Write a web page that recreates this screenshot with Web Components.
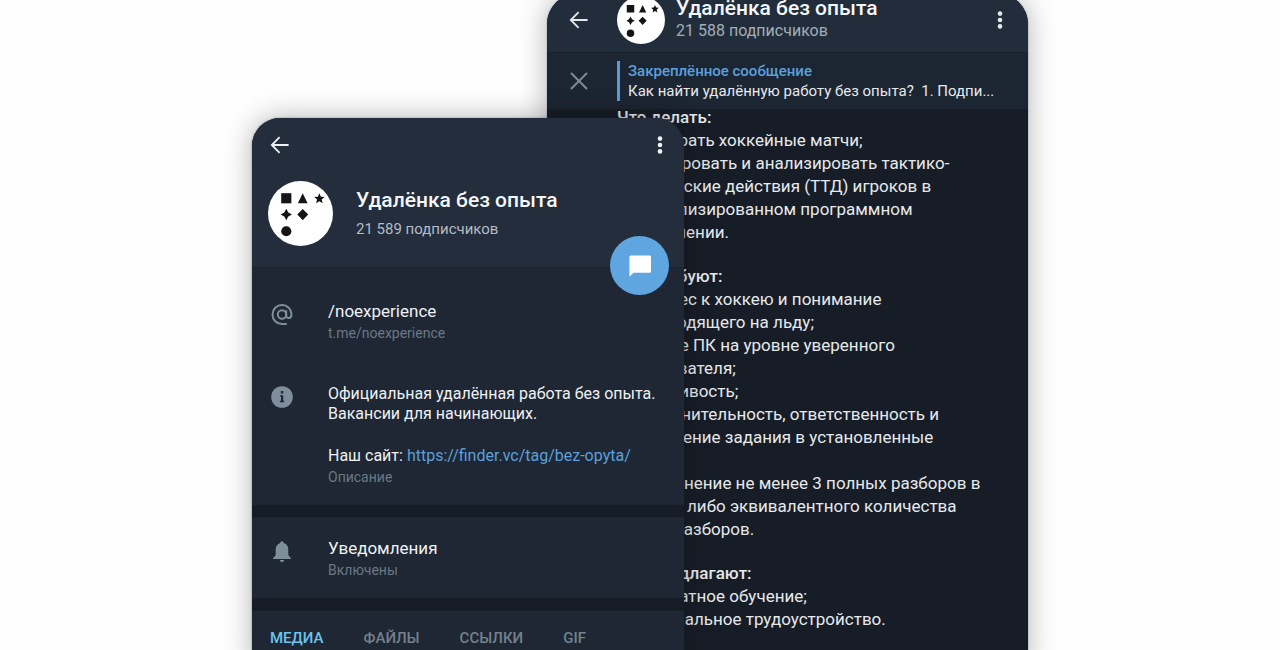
<!DOCTYPE html>
<html lang="ru">
<head>
<meta charset="utf-8">
<meta name="viewport" content="width=device-width, initial-scale=1">
<title>Удалёнка без опыта</title>
<style>
  body { margin: 0; background: #fefefe; font-family: Roboto, "Liberation Sans", sans-serif; }
</style>
</head>
<body>
<phone-stage>
  <channel-chat slot="back"></channel-chat>
  <channel-profile slot="front"></channel-profile>
</phone-stage>

<script>
const define = (name, html) => {
  const template = document.createElement('template');
  template.innerHTML = html;
  customElements.define(name, class extends HTMLElement {
    constructor() {
      super();
      this.attachShadow({ mode: 'open' }).append(template.content.cloneNode(true));
    }
  });
};

const icons = {
  back: '<svg viewBox="0 0 20 20" fill="none" stroke="currentColor" stroke-width="1.8"><path d="M18.6 10H2.6M9.6 2.2 1.8 10l7.8 7.8"/></svg>',
  more: '<svg viewBox="0 0 20 20" fill="currentColor"><circle cx="10" cy="3.6" r="2.3"/><circle cx="10" cy="10" r="2.3"/><circle cx="10" cy="16.4" r="2.3"/></svg>',
  close: '<svg viewBox="0 0 20 20" fill="none" stroke="currentColor" stroke-width="2"><path d="m2 2 16 16M18 2 2 18"/></svg>',
  at: '<svg viewBox="0 0 24 24" fill="none" stroke="currentColor" stroke-width="2"><circle cx="12" cy="12.5" r="4.2"/><path d="M16.2 8.2v5.4c0 3.6 5.3 3.4 5.3-1.1a9.5 9.5 0 1 0-9.5 9.5h4.8"/></svg>',
  info: '<svg viewBox="0 0 24 24"><circle cx="12" cy="11" r="10.8" fill="currentColor"/><path d="M10.9 5h2.4v2.4h-2.4zM10 9.2h3.2v5.6h1v1.4H9.9v-1.4h1.1v-4.2H10z" fill="#1e2733"/></svg>',
  bell: '<svg viewBox="0 0 24 24" fill="currentColor"><path d="M12 2.2c1 0 1.700.8 1.700 1.800 3.200.9 4.600 3.600 4.600 6.800v5.400l2.600 2.900v1H3.100v-1l2.600-2.900v-5.400c0-3.200 1.400-5.900 4.600-6.800 0-1 .7-1.800 1.700-1.800zM9.900 21.100h4.200a2.100 2.100 0 0 1-4.200 0z"/></svg>',
  chat: '<svg viewBox="0 0 24 24" fill="currentColor"><path d="M3 1.6h18.4c.9 0 1.6.7 1.6 1.6v14c0 .9-.7 1.6-1.6 1.6H5.600l-4.200 4V3.200c0-.9.7-1.600 1.600-1.600z"/></svg>'
};

customElements.define('ui-icon', class extends HTMLElement {
  constructor() {
    super();
    this.attachShadow({ mode: 'open' });
  }
  connectedCallback() {
    this.shadowRoot.innerHTML = `
      <style>
        :host { display: block; flex: none; width: 20px; height: 20px; }
        :host([size="24"]) { width: 24px; height: 24px; }
        svg { display: block; width: 100%; height: 100%; }
      </style>${icons[this.getAttribute('name')]}`;
  }
});

customElements.define('icon-button', class extends HTMLElement {
  constructor() {
    super();
    this.attachShadow({ mode: 'open' });
  }
  connectedCallback() {
    this.shadowRoot.innerHTML = `
      <style>
        :host { display: block; flex: none; }
        button { display: block; margin: 0; padding: 0; border: 0; background: none; color: inherit; cursor: pointer; }
      </style>
      <button type="button" aria-label="${this.getAttribute('label')}"><ui-icon name="${this.getAttribute('icon')}"></ui-icon></button>`;
  }
});

define('channel-avatar', `
  <style>
    :host { display: block; flex: none; width: 65px; height: 65px; }
    :host([small]) { width: 48px; height: 48px; }
    svg { display: block; width: 100%; height: 100%; }
  </style>
  <svg viewBox="0 0 64 64" fill="#151515" role="img" aria-label="Логотип канала">
    <circle cx="32" cy="32" r="32" fill="#fff"/>
    <path d="M13 12h10v10H13z"/>
    <path d="m34.2 12 4.8 10h-9.6z"/>
    <path d="m50.6 12 1.5 3.4 3.6.3-2.8 2.5.9 3.700-3.200-2-3.200 2 .9-3.700-2.800-2.500 3.600-.3z"/>
    <path d="M18 27.400 20 31l3.600 2-3.600 2-2 3.600L16 35l-3.600-2 3.600-2z"/>
    <path d="m34.200 27.600 2.700 2.700 2.700 2.700-2.700 2.700-2.700 2.900-2.700-2.900-2.700-2.700 2.700-2.700z"/>
    <circle cx="18" cy="49.500" r="5"/>
  </svg>`);

define('phone-stage', `
  <style>
    :host {
      display: grid; grid-template-columns: 295fr 137fr 344fr;
      width: 100%; max-width: 776px; height: 100vh; margin: 0 auto;
      overflow: clip; overflow-clip-margin: 200px;
    }
    ::slotted(*) { grid-row: 1; }
    ::slotted([slot="back"]) { grid-column: 2 / 4; margin-top: -6px; }
    ::slotted([slot="front"]) { grid-column: 1 / 3; margin-top: 118px; z-index: 1; }
  </style>
  <slot name="back"></slot><slot name="front"></slot>`);

define('channel-chat', `
  <style>
    :host {
      display: block; overflow: hidden; border-radius: 30px 30px 0 0;
      background: #171d27; color: #e6e9ec;
      box-shadow: 0 0 0 1px #c3c8ce, 0 0 28px rgba(0, 0, 0, .3);
    }
    header {
      display: flex; align-items: center; padding: 2px 18px 8px 22px;
      background: #222d3b; border-bottom: 1px solid #18202b;
    }
    channel-avatar { margin-left: 28px; }
    .name { flex: 1; align-self: flex-start; margin-left: 11px; white-space: nowrap; }
    h2 { margin: 0; font-size: 21px; line-height: 24px; font-weight: 500; color: #f4f6f8; }
    .name p { margin: 0; font-size: 16px; line-height: 22px; color: #a3adb8; }
    .pinned { display: flex; align-items: center; padding: 8px 18px 8px 22px; background: #1c2532; }
    .pinned icon-button { color: #7d8a96; }
    .quote { margin-left: 28px; padding-left: 8px; border-left: 3px solid #5b9bd8; font-size: 15px; line-height: 20px; white-space: pre; }
    .quote p { margin: 0; }
    .quote .label { color: #5ba0dc; font-weight: 500; }
    article { display: grid; gap: 21px; margin-top: -3px; padding-left: 70px; font-size: 17px; line-height: 23px; white-space: nowrap; }
    h3 { margin: 0; font-size: 17px; font-weight: 500; }
    article p { margin: 0; padding-left: 4px; }
  </style>
  <header>
    <icon-button icon="back" label="Назад"></icon-button>
    <channel-avatar small></channel-avatar>
    <div class="name"><h2>Удалёнка без опыта</h2><p>21 588 подписчиков</p></div>
    <icon-button icon="more" label="Меню"></icon-button>
  </header>
  <div class="pinned">
    <icon-button icon="close" label="Закрыть"></icon-button>
    <div class="quote"><p class="label">Закреплённое сообщение</p><p>Как найти удалённую работу без опыта?  1. Подпи...</p></div>
  </div>
  <article>
    <section>
      <h3>Что делать:</h3>
      <p>• Разбирать хоккейные матчи;<br>• Фиксировать и анализировать тактико-<br>технические действия (ТТД) игроков в<br>специализированном программном<br>обеспечении.</p>
    </section>
    <section>
      <h3>Что требуют:</h3>
      <p>• Интерес к хоккею и понимание<br>происходящего на льду;<br>• Знание ПК на уровне уверенного<br>пользователя;<br>• Усидчивость;<br>• Исполнительность, ответственность и<br>выполнение задания в установленные<br><br>• Выполнение не менее 3 полных разборов в<br>неделю либо эквивалентного количества<br>видео-разборов.</p>
    </section>
    <section>
      <h3>Что предлагают:</h3>
      <p>• Бесплатное обучение;<br>• Официальное трудоустройство.</p>
    </section>
  </article>`);

define('info-row', `
  <style>
    :host { display: flex; gap: 34px; padding: 0 18px; }
    .icon { color: #7f8e9b; padding-top: 2px; }
    .note { margin-top: 2px; font-size: 14px; line-height: 18px; color: #6b7885; }
  </style>
  <div class="icon"><slot name="icon"></slot></div>
  <div><slot></slot><div class="note"><slot name="note"></slot></div></div>`);

define('channel-profile', `
  <style>
    :host {
      display: block; border-radius: 28px 28px 0 0;
      background: #1e2733; color: #eef1f3;
      box-shadow: 0 0 2px rgba(40, 50, 60, .5), 0 0 28px rgba(0, 0, 0, .3);
    }
    header {
      position: relative; padding-bottom: 21px; border-radius: 28px 28px 0 0;
      background: #232d3b; border-bottom: 1px solid #1a222d;
    }
    .bar { display: flex; justify-content: space-between; align-items: center; height: 54px; padding: 0 14px 0 18px; }
    .identity { display: flex; align-items: center; gap: 23px; padding: 9px 16px 0; white-space: nowrap; }
    h1 { margin: 0 0 6px; font-size: 21px; line-height: 24px; font-weight: 500; color: #f4f6f8; }
    .identity p { margin: 0; font-size: 15px; line-height: 22px; color: #b4bcc5; }
    .fab {
      position: absolute; right: 15px; bottom: -28px; width: 59px; height: 59px; padding: 0;
      display: grid; place-items: center; border: 0; border-radius: 50%;
      background: #5fa6e0; color: #fff; cursor: pointer;
    }
    .info { display: grid; gap: 42px; padding: 32px 0 19px; }
    .value { font-size: 17px; line-height: 22px; }
    .about { font-size: 16px; line-height: 20px; white-space: nowrap; }
    .about p { margin: 0 0 22px; }
    .about p:last-child { margin: 0; }
    a { color: #5ba0dc; text-decoration: none; }
    .notify { padding: 20px 0 19px; border: solid #171d27; border-width: 12px 0 13px; }
    nav { display: flex; gap: 40px; padding: 17px 18px; }
    nav button { padding: 0; border: 0; background: none; font: 500 15px/20px Roboto, sans-serif; color: #74818d; cursor: pointer; }
    nav button[aria-selected="true"] { color: #6bc4ef; }
  </style>
  <header>
    <div class="bar">
      <icon-button icon="back" label="Назад"></icon-button>
      <icon-button icon="more" label="Меню"></icon-button>
    </div>
    <div class="identity">
      <channel-avatar></channel-avatar>
      <div><h1>Удалёнка без опыта</h1><p>21 589 подписчиков</p></div>
    </div>
    <button class="fab" type="button" aria-label="Открыть чат"><ui-icon name="chat" size="24"></ui-icon></button>
  </header>
  <div class="info">
    <info-row>
      <ui-icon slot="icon" name="at" size="24"></ui-icon>
      <div class="value">/noexperience</div>
      <span slot="note">t.me/noexperience</span>
    </info-row>
    <info-row>
      <ui-icon slot="icon" name="info" size="24"></ui-icon>
      <div class="about">
        <p>Официальная удалённая работа без опыта.<br>Вакансии для начинающих.</p>
        <p>Наш сайт: <a href="https://finder.vc/tag/bez-opyta/">https://finder.vc/tag/bez-opyta/</a></p>
      </div>
      <span slot="note">Описание</span>
    </info-row>
  </div>
  <div class="notify">
    <info-row>
      <ui-icon slot="icon" name="bell" size="24"></ui-icon>
      <div class="value">Уведомления</div>
      <span slot="note">Включены</span>
    </info-row>
  </div>
  <nav role="tablist">
    <button type="button" role="tab" aria-selected="true">МЕДИА</button>
    <button type="button" role="tab" aria-selected="false">ФАЙЛЫ</button>
    <button type="button" role="tab" aria-selected="false">ССЫЛКИ</button>
    <button type="button" role="tab" aria-selected="false">GIF</button>
  </nav>`);
</script>
</body>
</html>
